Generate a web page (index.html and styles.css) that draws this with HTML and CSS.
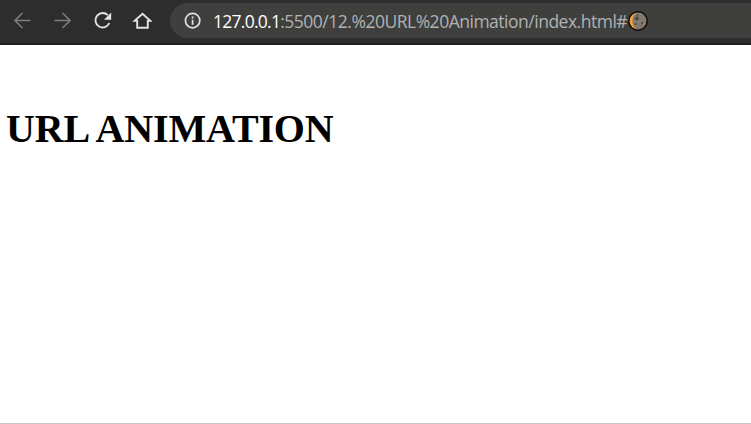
FILE: index.html
```html
<!DOCTYPE html>
<html lang="en">
<head>
<meta charset="utf-8">
<title>URL Animation</title>
<link rel="stylesheet" href="styles.css">
</head>
<body>
<header class="toolbar">
  <nav class="buttons">
    <svg class="icon muted" viewBox="0 0 20 20"><path d="M18.5 10.5H3M10.5 3L3 10.5l7.5 7.5"/></svg>
    <svg class="icon muted" viewBox="0 0 20 20"><path d="M2.5 10.5H18M10.5 3l7.5 7.5-7.5 7.5"/></svg>
    <svg class="icon" viewBox="0 0 20 20"><path d="M15.8 5.2A7.2 7.2 0 1 0 17.3 13"/><path class="solid" d="M19.2 2.6v7.2H12z"/></svg>
    <svg class="icon" viewBox="0 0 20 20"><path d="M2.6 10.9h2.6v6.9h10.6v-6.9h2.6l-7.9-7.2z"/></svg>
  </nav>
  <div class="address">
    <svg class="info" viewBox="0 0 18 18"><circle cx="8.6" cy="8.6" r="7.2"/><path d="M8.6 7.7v5M8.6 4.6v1.8"/></svg>
    <div class="url"><span class="host">127.0.0.1</span><span class="path">:5500/12.%20URL%20Animation/index.html#</span></div>
    <svg class="moon" viewBox="0 0 20 20"><circle cx="10" cy="10" r="9" fill="#f3a337"/><path fill="#84796f" d="M9.5 1a9 9 0 0 1 0 18C2.6 16 2.6 4 9.5 1z"/><g fill="#4a4643"><circle cx="8.8" cy="7.6" r="1.9"/><circle cx="9.7" cy="4.8" r=".8"/><circle cx="14" cy="12" r="1.1"/><circle cx="7.8" cy="13" r="1"/><circle cx="13.4" cy="15" r=".6"/></g><circle cx="10" cy="10" r="9.2" fill="none" stroke="#0d0d0d" stroke-width="1.5"/></svg>
  </div>
</header>
<main class="page">
  <h1 class="title">URL ANIMATION</h1>
</main>
</body>
</html>
```

FILE: styles.css
```css
* { box-sizing: border-box; }
body {
  margin: 0;
  height: 424px;
  display: flex;
  flex-direction: column;
  background: #fff;
  overflow: hidden;
}
.toolbar {
  height: 45px;
  flex: none;
  display: flex;
  padding-top: 3px;
  background: #2d2d2d;
  border-bottom: 2px solid #212020;
}
.buttons {
  display: flex;
  align-items: center;
  gap: 20px;
  height: 34px;
  width: 170px;
  padding-left: 12px;
}
.icon { width: 20px; height: 20px; fill: none; stroke: #e4e4e2; stroke-width: 1.9; }
.muted { stroke: #817c7a; stroke-width: 1.6; }
.solid { fill: #e4e4e2; stroke: none; }
.address {
  flex: 1;
  height: 35px;
  display: flex;
  align-items: center;
  padding-left: 14px;
  background: #3f3f3d;
  border-radius: 18px 0 0 18px;
}
.info { width: 18px; height: 18px; fill: none; stroke: #dfe1e3; stroke-width: 1.7; }
.url {
  width: 415px;
  margin-left: 11px;
  font: 17.5px/24px "Open Sans", "Noto Sans", sans-serif;
  white-space: nowrap;
}
.host { color: #fff; letter-spacing: -0.74px; }
.path { color: #b0b2b3; letter-spacing: -0.49px; }
.moon { width: 20px; height: 20px; flex: none; overflow: visible; }
.page {
  flex: 1;
  padding: 61px 6px 0;
  border-bottom: 1px solid #c4c4c4;
}
.title {
  margin: 0;
  font: bold 40px/46px "Liberation Serif", serif;
  letter-spacing: -0.13px;
  color: #000;
  white-space: nowrap;
}
```
